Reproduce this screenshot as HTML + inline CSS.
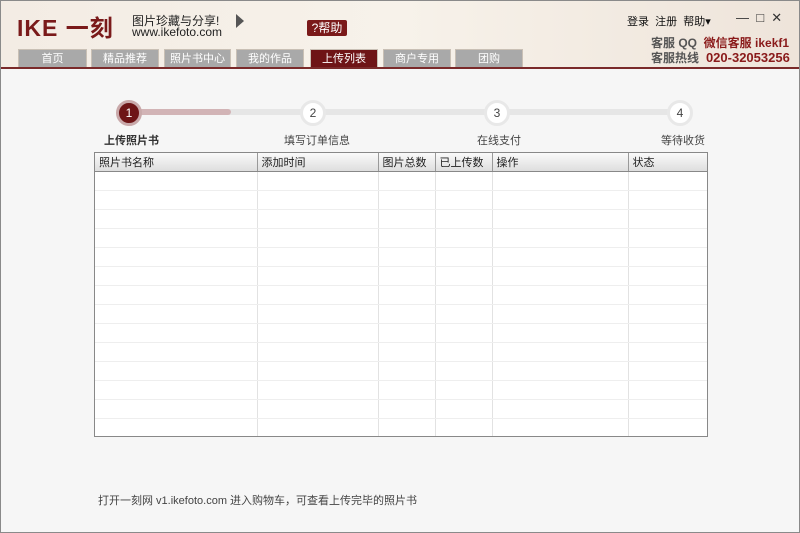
<!DOCTYPE html>
<html><head><meta charset="utf-8"><style>
*{margin:0;padding:0;box-sizing:border-box}
body{width:800px;height:533px;overflow:hidden;background:#f6f6f6;font-family:"Liberation Sans","Noto Sans CJK SC",sans-serif;position:relative;border:1px solid #8a8a8a}
.hdr{position:absolute;left:0;top:0;width:798px;height:68px;background:linear-gradient(90deg,#f3ece4,#f7f2ea 50%,#eee4da);border-bottom:2px solid #7a2a2a}
.a{position:absolute;white-space:nowrap}
.tab{position:absolute;top:48px;height:18px;background:#a9a9a9;color:#fff;font-size:11px;text-align:center;line-height:18px;border:1px solid #c9c0b5;border-bottom:none}
.tab.on{background:#6e1416}
.c{position:absolute;top:99px;width:26px;height:26px;border-radius:50%;background:#fff;border:3px solid #e8e8e8;font-size:12px;text-align:center;line-height:20px;color:#444}
.lbl{position:absolute;top:131px;font-size:11px;color:#444}
.tw{position:absolute;left:93px;top:151px;width:614px;height:285px;border:1px solid #888;background:#fff;overflow:hidden}
table{width:612px;border-collapse:collapse}
td,th{border-left:1px solid #e2e2e2;border-bottom:1px solid #eee;font-size:11px;font-weight:normal;text-align:left;padding-left:4px;height:19px}
td:first-child,th:first-child{border-left:none}
th{height:18px;background:linear-gradient(#fafafa,#dedede);border-left:1px solid #999;border-bottom:1px solid #888;color:#222}
</style></head><body>
<div class="hdr">
<div class="a" style="left:16px;top:8px;font-size:23px;font-weight:bold;color:#7a1a1a;letter-spacing:1px">IKE 一刻</div>
<div class="a" style="left:131px;top:11px;font-size:12px;color:#222">图片珍藏与分享!</div>
<div class="a" style="left:131px;top:24px;font-size:12px;color:#222">www.ikefoto.com</div>
<div class="a" style="left:235px;top:13px;width:0;height:0;border-left:8px solid #555;border-top:7px solid transparent;border-bottom:7px solid transparent"></div>
<div class="a" style="left:306px;top:19px;width:40px;height:16px;background:#7a1a1a;color:#fff;font-size:12px;line-height:16px;text-align:center;border-radius:2px">?帮助</div>
<div class="a" style="left:626px;top:12px;font-size:11px;color:#111">登录&nbsp;&nbsp;注册&nbsp;&nbsp;帮助▾</div>
<div class="a" style="left:735px;top:9px;font-size:13px;color:#333">—&nbsp;&nbsp;□&nbsp;&nbsp;✕</div>
<div class="a" style="left:650px;top:35px;font-size:12px;line-height:14px;font-weight:bold;color:#555">客服 QQ <span style="color:#8a1a1a">&nbsp;微信客服 ikekf1</span></div>
<div class="a" style="left:650px;top:49px;font-size:12px;line-height:15px;font-weight:bold;color:#555">客服热线 <span style="color:#8a1a1a;font-size:13px">&nbsp;020-32053256</span></div>
<div class="tab" style="left:17px;width:69px">首页</div>
<div class="tab" style="left:90px;width:68px">精品推荐</div>
<div class="tab" style="left:163px;width:67px">照片书中心</div>
<div class="tab" style="left:235px;width:68px">我的作品</div>
<div class="tab on" style="left:309px;width:68px">上传列表</div>
<div class="tab" style="left:382px;width:68px">商户专用</div>
<div class="tab" style="left:454px;width:68px">团购</div>
</div>
<div class="a" style="left:130px;top:108px;width:550px;height:6px;background:#e6e6e6;border-radius:3px"></div>
<div class="a" style="left:130px;top:108px;width:100px;height:6px;background:#d2b4b6;border-radius:3px"></div>
<div class="c" style="left:115px;background:#6e1416;border-color:#c9a9aa;color:#fff">1</div>
<div class="c" style="left:299px">2</div>
<div class="c" style="left:483px">3</div>
<div class="c" style="left:666px">4</div>
<div class="lbl" style="left:103px;font-weight:bold;color:#333">上传照片书</div>
<div class="lbl" style="left:283px">填写订单信息</div>
<div class="lbl" style="left:476px">在线支付</div>
<div class="lbl" style="left:660px">等待收货</div>
<div class="tw"><table>
<tr><th style="width:162px">照片书名称</th><th style="width:121px">添加时间</th><th style="width:57px">图片总数</th><th style="width:57px">已上传数</th><th style="width:136px">操作</th><th>状态</th></tr>
<tr><td></td><td></td><td></td><td></td><td></td><td></td></tr>
<tr><td></td><td></td><td></td><td></td><td></td><td></td></tr>
<tr><td></td><td></td><td></td><td></td><td></td><td></td></tr>
<tr><td></td><td></td><td></td><td></td><td></td><td></td></tr>
<tr><td></td><td></td><td></td><td></td><td></td><td></td></tr>
<tr><td></td><td></td><td></td><td></td><td></td><td></td></tr>
<tr><td></td><td></td><td></td><td></td><td></td><td></td></tr>
<tr><td></td><td></td><td></td><td></td><td></td><td></td></tr>
<tr><td></td><td></td><td></td><td></td><td></td><td></td></tr>
<tr><td></td><td></td><td></td><td></td><td></td><td></td></tr>
<tr><td></td><td></td><td></td><td></td><td></td><td></td></tr>
<tr><td></td><td></td><td></td><td></td><td></td><td></td></tr>
<tr><td></td><td></td><td></td><td></td><td></td><td></td></tr>
<tr><td></td><td></td><td></td><td></td><td></td><td></td></tr>
</table></div>
<div class="a" style="left:97px;top:491px;font-size:11px;color:#444">打开一刻网 v1.ikefoto.com 进入购物车，可查看上传完毕的照片书</div>
</body></html>
